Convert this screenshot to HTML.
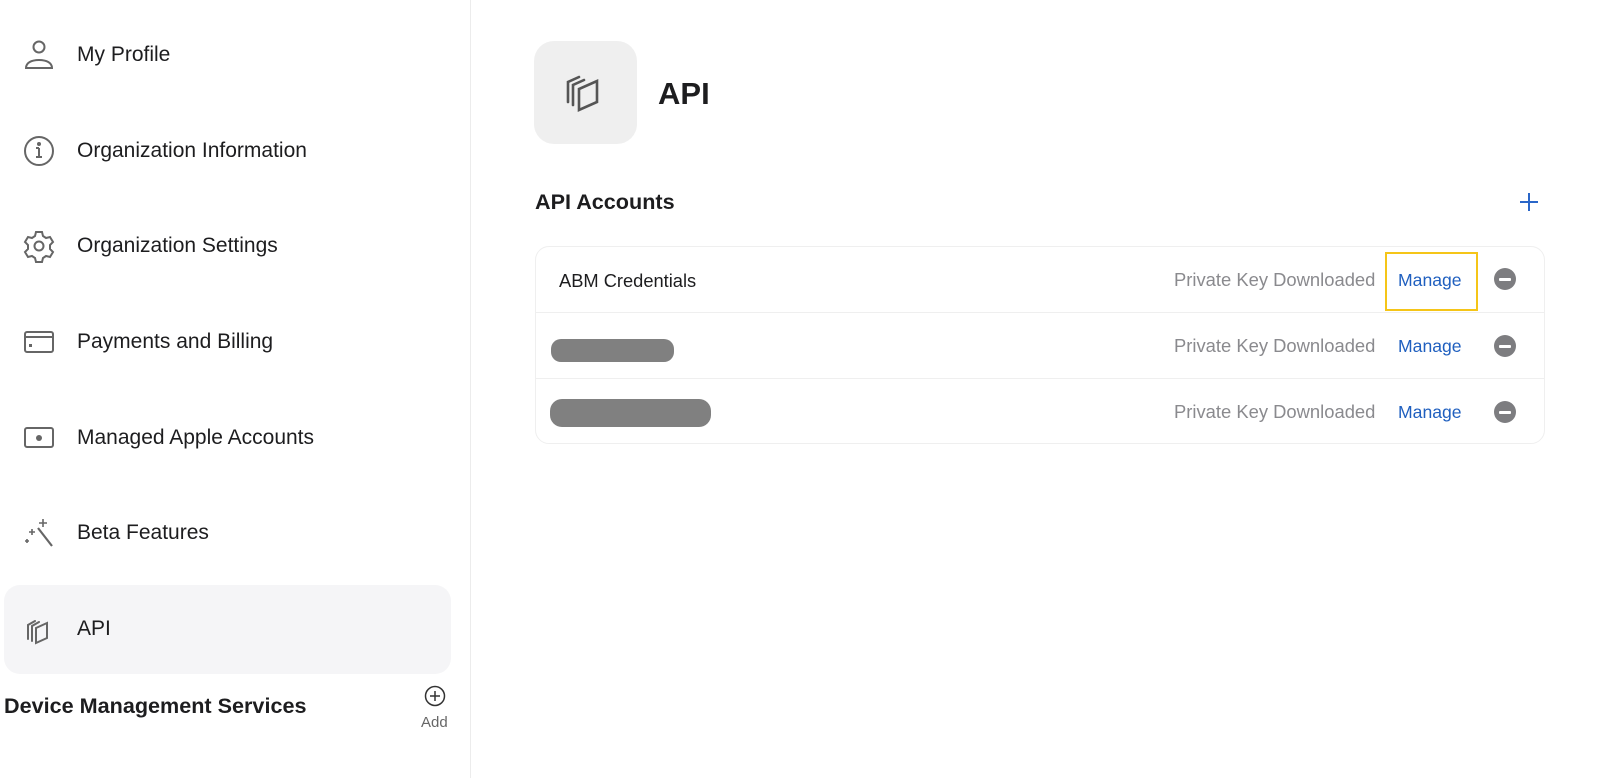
<!DOCTYPE html>
<html><head><meta charset="utf-8"><style>
*{margin:0;padding:0;box-sizing:border-box}
body{width:1600px;height:778px;background:#fff;font-family:"Liberation Sans",sans-serif;color:#1d1d1f;position:relative;overflow:hidden}
.side{position:absolute;left:0;top:0;width:471px;height:778px;border-right:1px solid #ececec}
.item{position:absolute;left:0;width:460px;height:60px;display:flex;align-items:center}
.item svg{position:absolute;left:22px}
.item span{position:absolute;left:77px;font-size:21px;color:#1d1d1f}
.sel{position:absolute;left:4px;top:585px;width:447px;height:89px;background:#f5f5f7;border-radius:16px}
.abs{position:absolute}
.row{position:absolute;left:536px;width:1008px;height:66px;border-top:1px solid #efefef}
.pk{position:absolute;left:638px;font-size:18.4px;color:#8a8a8e}
.mg{position:absolute;left:862px;font-size:17.6px;color:#1f5fbf}
.mi{position:absolute;left:958px;width:22px;height:22px;border-radius:50%;background:#7d7d80}
.mi:after{content:"";position:absolute;left:5px;top:10px;width:12px;height:2.5px;background:#fff;border-radius:1px}
</style></head><body>
<div class="side">
<div class="sel"></div>
<div class="item" style="top:25px"><svg width="34" height="34" viewBox="0 0 34 34" fill="none" stroke="#666" stroke-width="2"><circle cx="17" cy="9" r="5.5"/><path d="M4 30c0-5 5-8 13-8s13 3 13 8z"/></svg><span>My Profile</span></div>
<div class="item" style="top:121px"><svg width="34" height="34" viewBox="0 0 34 34" fill="none" stroke="#666" stroke-width="2"><circle cx="17" cy="17" r="14"/><path d="M17 14v9M14 23h6M14 14h3"/><circle cx="17" cy="10" r="1" fill="#666"/></svg><span>Organization Information</span></div>
<div class="item" style="top:216px"><svg width="34" height="34" viewBox="0 0 34 34" fill="none" stroke="#666" stroke-width="2"><path d="M14 3h6l1 4 3 2 4-1 3 5-3 3v4l3 3-3 5-4-1-3 2-1 4h-6l-1-4-3-2-4 1-3-5 3-3v-4l-3-3 3-5 4 1 3-2z"/><circle cx="17" cy="17" r="4.5"/></svg><span>Organization Settings</span></div>
<div class="item" style="top:312px"><svg width="34" height="34" viewBox="0 0 34 34" fill="none" stroke="#666" stroke-width="2"><rect x="3" y="7" width="28" height="20" rx="2"/><path d="M3 12h28"/><rect x="7" y="19" width="3" height="3" fill="#666" stroke="none"/></svg><span>Payments and Billing</span></div>
<div class="item" style="top:408px"><svg width="34" height="34" viewBox="0 0 34 34" fill="none" stroke="#666" stroke-width="2"><rect x="3" y="7" width="28" height="19" rx="2"/><circle cx="17" cy="17" r="3" fill="#666" stroke="none"/></svg><span>Managed Apple Accounts</span></div>
<div class="item" style="top:503px"><svg width="34" height="34" viewBox="0 0 34 34" fill="none" stroke="#666" stroke-width="2.2"><path d="M16 12l14 18"/><path d="M21 3v8M17 7h8M10 13v6M7 16h6M5 23v4M3 25h4" stroke-width="1.6"/></svg><span>Beta Features</span></div>
<div class="item" style="top:599px"><svg width="34" height="34" viewBox="0 0 34 34" fill="none" stroke="#666" stroke-width="2" stroke-linecap="round"><path d="M6 27V13l7-4M10 29V14l7-4"/><path d="M14 31V16l11-5v15z"/></svg><span>API</span></div>
<div class="abs" style="left:4px;top:693px;font-size:21.6px;font-weight:bold;color:#1d1d1f">Device Management Services</div>
<svg class="abs" style="left:424px;top:685px" width="22" height="22" viewBox="0 0 22 22" fill="none" stroke="#333" stroke-width="1.5"><circle cx="11" cy="11" r="9.5"/><path d="M11 6v10M6 11h10"/></svg>
<div class="abs" style="left:421px;top:714px;font-size:15px;color:#666">Add</div>
</div>
<div class="abs" style="left:534px;top:41px;width:103px;height:103px;background:#efefef;border-radius:20px"></div>
<svg class="abs" style="left:560px;top:70px" width="46" height="46" viewBox="0 0 46 46" fill="none" stroke="#555" stroke-width="2.6" stroke-linecap="round"><path d="M8 32V12l11-5M13 35V15l11-5"/><path d="M19 40V19l18-8v21z"/></svg>
<div class="abs" style="left:658px;top:76px;font-size:31px;font-weight:bold;color:#1d1d1f">API</div>
<div class="abs" style="left:535px;top:189px;font-size:21.6px;font-weight:bold;color:#1d1d1f">API Accounts</div>
<svg class="abs" style="left:1518px;top:191px" width="22" height="22" viewBox="0 0 22 22" stroke="#2a66c8" stroke-width="2"><path d="M11 2v18M2 11h18"/></svg>
<div class="abs" style="left:535px;top:246px;width:1010px;height:198px;border:1px solid #efefef;border-radius:14px"></div>
<div class="row" style="top:246px;border-top:none">
<div class="abs" style="left:23px;top:24px;font-size:18.3px">ABM Credentials</div>
<div class="pk" style="top:23px">Private Key Downloaded</div>
<div class="mg" style="top:24px">Manage</div>
<div class="abs" style="left:849px;top:6px;width:93px;height:59px;border:2px solid #f5c518"></div>
<div class="mi" style="top:22px"></div>
</div>
<div class="row" style="top:312px">
<div class="abs" style="left:15px;top:26px;width:123px;height:23px;background:#808080;border-radius:10px"></div>
<div class="pk" style="top:22px">Private Key Downloaded</div>
<div class="mg" style="top:23px">Manage</div>
<div class="mi" style="top:22px"></div>
</div>
<div class="row" style="top:378px">
<div class="abs" style="left:14px;top:20px;width:161px;height:28px;background:#808080;border-radius:12px"></div>
<div class="pk" style="top:22px">Private Key Downloaded</div>
<div class="mg" style="top:23px">Manage</div>
<div class="mi" style="top:22px"></div>
</div>
</body></html>
